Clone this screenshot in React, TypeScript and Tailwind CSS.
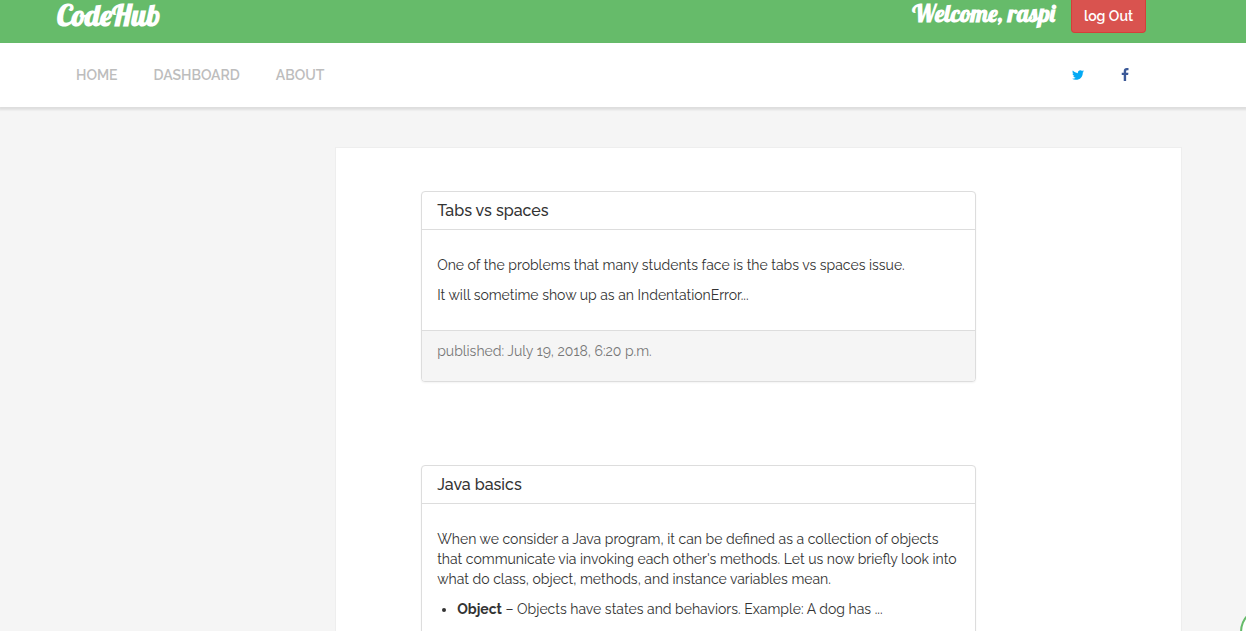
import type { ReactNode } from 'react';
import { FaTwitter } from 'react-icons/fa';

const navLinks = ['Home', 'Dashboard', 'About'];

function FacebookIcon() {
  return (
    <svg viewBox="0 0 1792 1792" fill="currentColor" aria-hidden="true" className="size-[14px]">
      <path d="M1343 12v264h-157q-86 0-116 36t-30 108v189h293l-39 296h-254v759H734V905H479V609h255V391q0-186 104-288.5T1115 0q147 0 228 12z" />
    </svg>
  );
}

function Header() {
  return (
    <header className="flex h-[43px] items-start justify-between bg-[#66bb6a] pr-[100px] pl-[57px] text-white">
      <a
        href="#home"
        className="font-['Lobster','Lato',sans-serif] text-[30px] leading-[30px] font-bold whitespace-nowrap"
      >
        CodeHub
      </a>
      <div className="flex items-start gap-4">
        <span className="font-['Lobster','Lato',sans-serif] text-[24px] leading-[26px] font-bold whitespace-nowrap">
          Welcome, raspi
        </span>
        <button
          type="button"
          className="h-[33px] w-[75px] rounded-b border border-t-0 border-[#d43f3a] bg-[#d9534f] text-[14px] leading-5 font-semibold whitespace-nowrap"
        >
          log Out
        </button>
      </div>
    </header>
  );
}

function NavBar() {
  return (
    <nav className="relative flex h-16 items-center justify-between bg-white pr-[114px] pl-[76px] shadow-[0_2px_2px_1px_rgba(0,0,0,0.09)]">
      <ul className="flex gap-9">
        {navLinks.map((label) => (
          <li key={label}>
            <a href={`#${label.toLowerCase()}`} className="text-[14px] leading-5 font-semibold text-[#bdbdbd] uppercase">
              {label}
            </a>
          </li>
        ))}
      </ul>
      <div className="flex items-center gap-[34px]">
        <a href="#twitter" aria-label="Twitter" className="text-[#03a9f4]">
          <FaTwitter className="size-3" />
        </a>
        <a href="#facebook" aria-label="Facebook" className="text-[#3b5998]">
          <FacebookIcon />
        </a>
      </div>
    </nav>
  );
}

function PostCard({ title, published, children }: { title: string; published: string; children: ReactNode }) {
  return (
    <article className="overflow-hidden rounded border border-[#dddddd] bg-white shadow-xs">
      <h2 className="border-b border-[#dddddd] px-[15px] pt-[9px] pb-2 text-[16px] leading-5 font-medium">{title}</h2>
      <div className="flex flex-col gap-[10px] px-[15px] py-[25px]">{children}</div>
      <footer className="border-t border-[#dddddd] bg-[#f5f5f5] px-[15px] pt-[10px] pb-5 text-[#777777]">
        published: {published}
      </footer>
    </article>
  );
}

export default function App() {
  return (
    <div className="h-screen overflow-hidden bg-[#f5f5f5] font-['Raleway','Lato',sans-serif] text-[14px] leading-5 font-normal text-[#333333]">
      <Header />
      <NavBar />
      <main className="mt-10 mr-[5.1%] ml-[26.9%] border border-[#eeeeee] bg-white pt-[43px] pb-20 pl-[85px]">
        <div className="flex w-full max-w-[555px] flex-col gap-[83px]">
          <PostCard title="Tabs vs spaces" published="July 19, 2018, 6:20 p.m.">
            <p>One of the problems that many students face is the tabs vs spaces issue.</p>
            <p>It will sometime show up as an IndentationError...</p>
          </PostCard>
          <PostCard title="Java basics" published="July 19, 2018, 6:20 p.m.">
            <p>
              When we consider a Java program, it can be defined as a collection of objects that communicate via
              invoking each other's methods. Let us now briefly look into what do class, object, methods, and instance
              variables mean.
            </p>
            <ul className="list-disc pl-5">
              <li>
                <strong className="font-bold">Object</strong> – Objects have states and behaviors. Example: A dog has
                ...
              </li>
            </ul>
          </PostCard>
        </div>
      </main>
      <button
        type="button"
        aria-label="Open help"
        className="fixed -right-11 -bottom-[26px] size-[50px] rounded-full border-2 border-[#66bb6a] bg-white"
      />
    </div>
  );
}
